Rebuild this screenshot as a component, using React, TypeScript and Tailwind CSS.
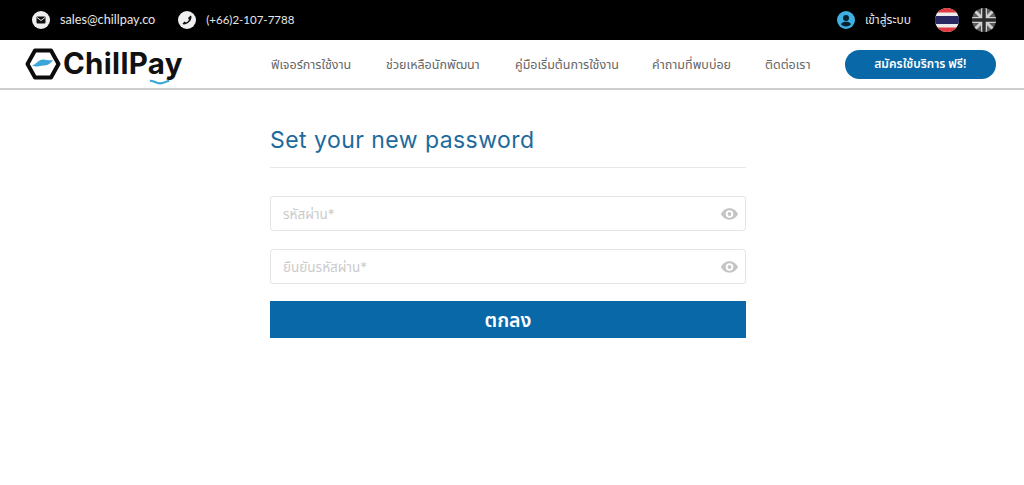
import React from 'react';

const FONT = "font-['Inter','Noto_Sans','Noto_Sans_Thai','Noto_Sans_CJK_SC',sans-serif]";

const navLinks = [
  { label: 'ฟีเจอร์การใช้งาน', width: 'w-[115px]' },
  { label: 'ช่วยเหลือนักพัฒนา', width: 'w-[129px]' },
  { label: 'คู่มือเริ่มต้นการใช้งาน', width: 'w-[137px]' },
  { label: 'คำถามที่พบบ่อย', width: 'w-[113px]' },
  { label: 'ติดต่อเรา', width: 'w-[80px]' },
];

const MailIcon = () => (
  <svg viewBox="0 0 18 18" className="h-[18px] w-[18px]">
    <circle cx="9" cy="9" r="9" fill="#efefef" />
    <rect x="4.500" y="5.500" width="9" height="7" rx="1" fill="#111" />
    <path d="M5 6.500 9 9.500l4-3" fill="none" stroke="#efefef" strokeWidth="1" />
  </svg>
);

const PhoneIcon = () => (
  <svg viewBox="0 0 18 18" className="h-[18px] w-[18px]">
    <circle cx="9" cy="9" r="9" fill="#efefef" />
    <path
      d="M12.600 4.600c.5.3.9.7.9 1.200 0 4-3.700 7.700-7.700 7.700-.5 0-.9-.4-1.200-.9l1.900-2 1.600 1c1.100-.6 2.300-1.800 2.900-2.900l-1-1.600z"
      fill="#111"
    />
  </svg>
);

const UserIcon = () => (
  <svg viewBox="0 0 18 18" className="h-[18px] w-[18px]">
    <circle cx="9" cy="9" r="9" fill="#3db0e4" />
    <circle cx="9" cy="7" r="3" fill="#06222f" />
    <path d="M3.900 13.200C5 11.400 7 10.800 9 10.800s4 .6 5.100 2.400A6.600 6.600 0 0 1 9 15.600a6.600 6.600 0 0 1-5.100-2.400z" fill="#06222f" />
  </svg>
);

const ThaiFlag = () => (
  <svg viewBox="0 0 24 24" className="h-6 w-6">
    <clipPath id="th">
      <circle cx="12" cy="12" r="12" />
    </clipPath>
    <g clipPath="url(#th)">
      <rect width="24" height="24" fill="#ececec" />
      <rect width="24" height="4.500" fill="#e03a40" />
      <rect y="19.500" width="24" height="4.500" fill="#e03a40" />
      <rect y="8" width="24" height="8" fill="#2a2860" />
    </g>
  </svg>
);

const UkFlag = () => (
  <svg viewBox="0 0 24 24" className="h-6 w-6">
    <clipPath id="uk">
      <circle cx="12" cy="12" r="12" />
    </clipPath>
    <g clipPath="url(#uk)">
      <rect width="24" height="24" fill="#5c5c5c" />
      <path d="M0 0 24 24M24 0 0 24" stroke="#cfcfcf" strokeWidth="3" />
      <path d="M12 0v24M0 12h24" stroke="#cfcfcf" strokeWidth="6" />
      <path d="M12 0v24M0 12h24" stroke="#2a2a2a" strokeWidth="3.400" />
    </g>
  </svg>
);

const Logo = () => (
  <div className="flex items-center">
    <svg viewBox="0 0 36 32" className="h-[32px] w-[36px]">
      <path d="M10 2.500h16L33.500 16 26 29.500H10L2.500 16z" fill="#fff" stroke="#0c0c0c" strokeWidth="4" strokeLinejoin="round" />
      <path d="M7 17.500c4-1 6-6 11.500-6 3 0 5 1.500 9.500.5-3 4.500-6.500 5.500-9.500 5.500-4 0-6 2.500-11.500 0z" fill="#3aa6da" />
    </svg>
    <div className="relative ml-[2px]">
      <span className="text-[29.500px] leading-none font-bold tracking-[0.3px] text-[#111]">ChillPay</span>
      <svg viewBox="0 0 26 8" className="absolute top-[30px] right-[12px] h-[7px] w-[22px]">
        <path d="M1 2c5 0 7 3 12 3s6-2 11-3" fill="none" stroke="#3aa6da" strokeWidth="2.500" />
      </svg>
    </div>
  </div>
);

const EyeIcon = () => (
  <svg viewBox="0 0 18 12" className="h-[12px] w-[17px]">
    <path
      fillRule="evenodd"
      d="M9 0c4 0 7.300 2.500 9 6-1.700 3.500-5 6-9 6S1.700 9.500 0 6c1.700-3.500 5-6 9-6zm0 2a4 4 0 1 0 0 8 4 4 0 0 0 0-8zm0 2a2 2 0 1 1 0 4 2 2 0 0 1 0-4z"
      fill="#c4c4c4"
    />
  </svg>
);

const PasswordField = ({ placeholder }: { placeholder: string }) => (
  <div className="flex h-[35px] items-center justify-between rounded-[3px] border border-[#e4e4e4] pr-[7px] pl-3">
    <span className="pt-[2px] text-[13.500px] text-[#cccccc]">{placeholder}</span>
    <EyeIcon />
  </div>
);

export default function App() {
  return (
    <div className={`min-h-[485px] bg-white ${FONT}`}>
      <div className="flex h-10 items-center justify-between bg-black pr-[28px] pl-[32px] text-[#e6e6e6]">
        <div className="flex items-center font-['Lato','Noto_Sans',sans-serif]">
          <MailIcon />
          <span className="ml-[10px] text-[12.700px]">sales@chillpay.co</span>
          <span className="ml-[23px]">
            <PhoneIcon />
          </span>
          <span className="ml-[10px] text-[11.500px]">(+66)2-107-7788</span>
        </div>
        <div className="flex items-center">
          <UserIcon />
          <span className="ml-[10px] text-[12px]">เข้าสู่ระบบ</span>
          <span className="ml-[24px]">
            <ThaiFlag />
          </span>
          <span className="ml-[13px]">
            <UkFlag />
          </span>
        </div>
      </div>

      <nav className="flex h-[50px] items-center border-b-2 border-[#cfcfcf] pr-[28px] pl-[25px]">
        <Logo />
        <div className="ml-auto flex items-center pt-[2px] text-[12.500px] text-[#666666]">
          {navLinks.map((link) => (
            <a key={link.label} className={link.width}>
              {link.label}
            </a>
          ))}
        </div>
        <button className="h-[29px] w-[151px] rounded-full bg-[#0868a8] text-[12px] font-semibold text-white">
          สมัครใช้บริการ ฟรี!
        </button>
      </nav>

      <main className="ml-[270px] w-[476px] pt-[33px]">
        <h1 className="border-b border-[#e8e8e8] pb-[9px] text-[23px] leading-[35px] tracking-[0.45px] text-[#1d6a9c]">
          Set your new password
        </h1>
        <div className="mt-[28px] flex flex-col gap-[18px]">
          <PasswordField placeholder="รหัสผ่าน*" />
          <PasswordField placeholder="ยืนยันรหัสผ่าน*" />
        </div>
        <button className="mt-[17px] h-[37px] w-full bg-[#0868a8] pt-[2px] text-[19.500px] font-semibold text-white">
          ตกลง
        </button>
      </main>
    </div>
  );
}
